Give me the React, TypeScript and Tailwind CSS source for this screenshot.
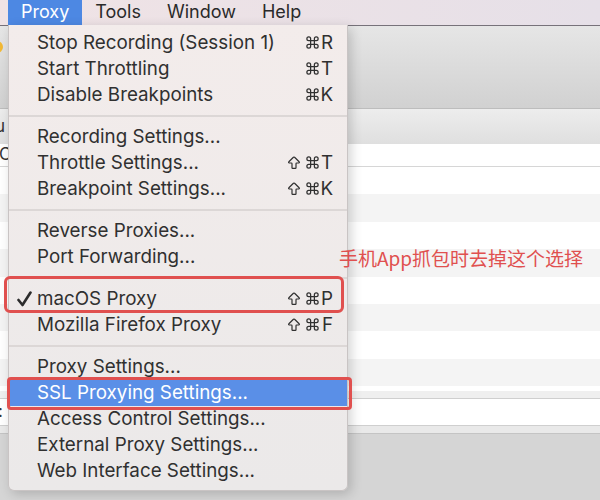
import React from "react";
import { Command, ArrowBigUp } from "lucide-react";

type Item = { label: string; keys?: string; checked?: boolean; active?: boolean };

const sections: Item[][] = [
  [
    { label: "Stop Recording (Session 1)", keys: "⌘R" },
    { label: "Start Throttling", keys: "⌘T" },
    { label: "Disable Breakpoints", keys: "⌘K" },
  ],
  [
    { label: "Recording Settings..." },
    { label: "Throttle Settings...", keys: "⇧⌘T" },
    { label: "Breakpoint Settings...", keys: "⇧⌘K" },
  ],
  [
    { label: "Reverse Proxies..." },
    { label: "Port Forwarding..." },
  ],
  [
    { label: "macOS Proxy", keys: "⇧⌘P", checked: true },
    { label: "Mozilla Firefox Proxy", keys: "⇧⌘F" },
  ],
  [
    { label: "Proxy Settings..." },
    { label: "SSL Proxying Settings...", active: true },
    { label: "Access Control Settings..." },
    { label: "External Proxy Settings..." },
    { label: "Web Interface Settings..." },
  ],
];

const latin = { fontFamily: "Inter, 'Noto Sans', 'DejaVu Sans', sans-serif" };

// shift / command glyphs drawn as icons, the letter stays text
function Shortcut({ keys, active }: { keys: string; active?: boolean }) {
  const chars = Array.from(keys);
  return (
    <div className={`flex items-center ${active ? "text-white" : "text-[#303030]"}`}>
      {chars.map((c, i) => {
        if (c === "⇧")
          return (
            <span key={i} className="w-[16px] mr-[2px] flex justify-center">
              <ArrowBigUp size={16} strokeWidth={1.8} />
            </span>
          );
        if (c === "⌘")
          return (
            <span key={i} className="w-[16px] flex justify-center">
              <Command size={15} strokeWidth={2} />
            </span>
          );
        return (
          <span key={i} className="w-[13px] text-right">
            {c}
          </span>
        );
      })}
    </div>
  );
}

function MenuRow({ item }: { item: Item }) {
  return (
    <div
      className={`relative h-[26px] flex items-center justify-between pl-[28px] pr-[14px] text-[18.8px] leading-none ${
        item.active ? "bg-[#5a8fe7] text-white" : "text-[#303030]"
      }`}
    >
      {item.checked && (
        <svg className="absolute left-[8px] top-[5px]" width="15" height="16" viewBox="0 0 15 16">
          <path d="M1.5 9 L5.5 14 L13.5 1.5" fill="none" stroke="#2c2c2c" strokeWidth="2.6" strokeLinecap="round" strokeLinejoin="round" />
        </svg>
      )}
      <span>{item.label}</span>
      {item.keys && <Shortcut keys={item.keys} active={item.active} />}
    </div>
  );
}

function StripeRows() {
  const rows = [0, 1, 2, 3, 4, 5, 6, 7];
  return (
    <div className="flex flex-col">
      {rows.map((r) => (
        <div key={r} className={`h-[27.4px] ${r % 2 === 0 ? "bg-white" : "bg-[#f4f4f4]"}`} />
      ))}
    </div>
  );
}

export default function App() {
  return (
    <div className="relative w-[600px] h-[500px] overflow-hidden bg-[#d5d5d5]" style={latin}>
      {/* menubar */}
      <div className="h-[25px] flex items-stretch pl-[8px] text-[18px] text-[#2a2a2a] bg-gradient-to-r from-[#f0e3e5] to-[#e6e0e8]">
        <div className="px-[13px] flex items-center pb-[2px] bg-[#4d88e3] text-white">Proxy</div>
        <div className="px-[13px] flex items-center pb-[2px]">Tools</div>
        <div className="px-[13px] flex items-center pb-[2px]">Window</div>
        <div className="px-[13px] flex items-center pb-[2px]">Help</div>
      </div>

      {/* window behind */}
      <div className="flex flex-col">
        <div className="h-px bg-[#77727a]" />
        <div className="h-[82px] bg-gradient-to-b from-[#e6e6e6] to-[#d1d1d1] flex items-start">
          <div className="mt-[15px] -ml-[9px] w-[12px] h-[12px] rounded-full bg-[#f2b935]" />
        </div>
        <div className="h-px bg-[#bdbdbd]" />
        <div className="h-[35px] bg-gradient-to-b from-[#ededed] to-[#dfdfdf] flex items-center text-[17px] text-[#333]">
          <span className="-ml-[5px]">u</span>
        </div>
        <div className="h-[22px] bg-white flex items-center text-[17px] text-[#333]">
          <span className="-ml-[1px]">Co</span>
        </div>
        <div className="h-px bg-[#d6d6d6]" />
        <StripeRows />
        <div className="h-[5px] bg-white" />
        <div className="h-[7px] bg-[#efefef]" />
        <div className="h-px bg-[#cfcfcf]" />
        <div className="h-[26px] bg-white flex items-center text-[17px] text-[#333]">
          <span className="-ml-[2px]">:</span>
        </div>
        <div className="h-px bg-[#cfcfcf]" />
        <div className="h-[7px] bg-[#e9e9e9]" />
        <div className="h-px bg-[#c4c4c4]" />
      </div>

      {/* dropdown menu */}
      <div className="absolute left-[8px] top-[25px] w-[340px] pt-[5px] pb-[6px] rounded-b-[6px] border border-t-0 border-[#c9c4c4] bg-gradient-to-b from-[#f3eceb] to-[#ebe9e9] shadow-[3px_3px_12px_rgba(0,0,0,0.18)]">
        {sections.map((sec, si) => (
          <div key={si}>
            {si > 0 && <div className="my-[7px] h-[2px] bg-[#dcd7d6]" />}
            {sec.map((item) => (
              <MenuRow key={item.label} item={item} />
            ))}
          </div>
        ))}
      </div>

      {/* annotations */}
      <div className="absolute left-[4px] top-[276px] w-[340px] h-[37px] rounded-[6px] border-[3px] border-[#e0504f]" />
      <div className="absolute left-[7px] top-[377px] w-[345px] h-[33px] rounded-[4px] border-[3px] border-[#e0504f]" />
      <div
        className="absolute left-[339px] top-[246px] text-[19px] leading-[24px] text-[#e0504f]"
        style={{ fontFamily: "'Noto Sans CJK SC', 'Noto Sans', sans-serif" }}
      >
        手机App抓包时去掉这个选择
      </div>
    </div>
  );
}
